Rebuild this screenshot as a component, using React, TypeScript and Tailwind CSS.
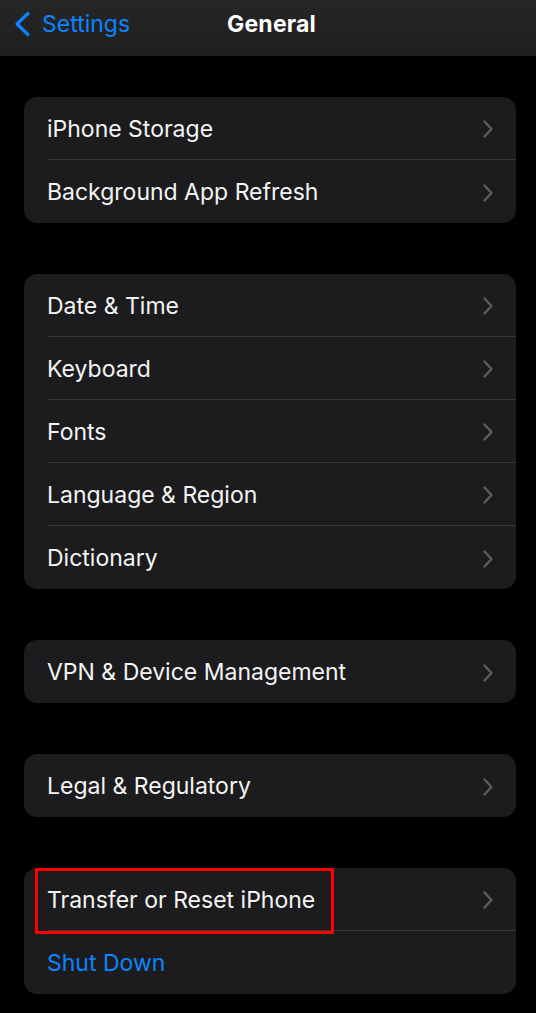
import React from "react";

const Chevron = () => (
  <svg width="12" height="20" viewBox="0 0 12 20" className="shrink-0">
    <path d="M2.5 2.5 L9.5 10 L2.5 17.5" fill="none" stroke="#5c5c60" strokeWidth="2.4" strokeLinecap="round" strokeLinejoin="round" />
  </svg>
);

type RowProps = { label: string; last?: boolean; blue?: boolean; chevron?: boolean; boxed?: boolean };

const Row = ({ label, last, blue, chevron = true, boxed }: RowProps) => (
  <div className="relative flex h-[63px] items-stretch pl-[23px]">
    <div className={`flex flex-1 items-center pr-[22px] pt-[2px] ${last ? "" : "border-b border-[#38383a]"}`}>
      <span className={`flex-1 text-[23px] ${blue ? "text-[#0a84ff]" : "text-[#f4f4f4]"}`}>{label}</span>
      {chevron && <Chevron />}
    </div>
    {boxed && (
      <div className="pointer-events-none absolute left-[11px] top-0 h-[66px] w-[299px] border-[3px] border-[#ff0000]" />
    )}
  </div>
);

const Card = ({ children }: { children: React.ReactNode }) => (
  <div className="ml-[24px] mr-[20px] overflow-hidden rounded-[13px] bg-[#1c1c1e]">{children}</div>
);

export default function App() {
  return (
    <div className="flex h-[1013px] w-[536px] flex-col bg-black" style={{ fontFamily: "Inter, 'Noto Sans', sans-serif" }}>
      <div className="relative flex h-[56px] items-start bg-gradient-to-b from-[#262626] to-[#1f1f1f] pt-[8px]">
        <div className="flex items-center pl-[13px]">
          <svg width="20" height="26" viewBox="0 0 20 26">
            <path d="M15 2.5 L4 13 L15 23.5" fill="none" stroke="#0a84ff" strokeWidth="3.2" strokeLinecap="round" strokeLinejoin="round" />
          </svg>
          <span className="ml-[9px] text-[23px] leading-[32px] text-[#0a84ff]">Settings</span>
        </div>
        <span className="absolute left-[227px] top-[8px] text-[23px] font-bold leading-[32px] tracking-[0.2px] text-white">General</span>
      </div>

      <div className="flex flex-col gap-[51px] pt-[41px]">
        <Card>
          <Row label="iPhone Storage" />
          <Row label="Background App Refresh" last />
        </Card>
        <Card>
          <Row label="Date & Time" />
          <Row label="Keyboard" />
          <Row label="Fonts" />
          <Row label="Language & Region" />
          <Row label="Dictionary" last />
        </Card>
        <Card>
          <Row label="VPN & Device Management" last />
        </Card>
        <Card>
          <Row label="Legal & Regulatory" last />
        </Card>
        <Card>
          <Row label="Transfer or Reset iPhone" boxed />
          <Row label="Shut Down" blue chevron={false} last />
        </Card>
      </div>
    </div>
  );
}
